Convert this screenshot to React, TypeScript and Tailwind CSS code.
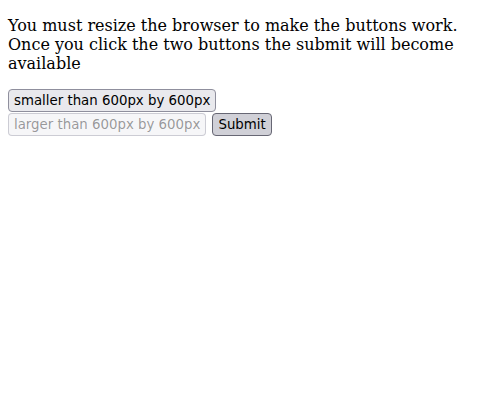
export default function App() {
  return (
    <div className="m-2 font-['DejaVu_Serif',serif] text-base leading-[normal] text-black">
      <p className="my-4">
        You must resize the browser to make the buttons work. Once you click the two buttons the submit will become
        available
      </p>
      <div className="flex flex-col gap-px font-['DejaVu_Sans',sans-serif] text-[13.333px] leading-[normal]">
        <div className="flex">
          <button className="flex h-[23px] items-center rounded-[4px] border border-[#8f8f9d] bg-[#e9e9ed] px-[5px] text-black">
            smaller than 600px by 600px
          </button>
        </div>
        <div className="flex gap-[6px]">
          <button
            disabled
            className="flex h-[23px] items-center rounded-[4px] border border-[#8f8f9d66] bg-[#e9e9ed66] px-[5px] text-[#00000066]"
          >
            larger than 600px by 600px
          </button>
          <button className="flex h-[23px] items-center rounded-[4px] border border-[#676774] bg-[#d0d0d7] px-[5px] text-black">
            Submit
          </button>
        </div>
      </div>
    </div>
  );
}
